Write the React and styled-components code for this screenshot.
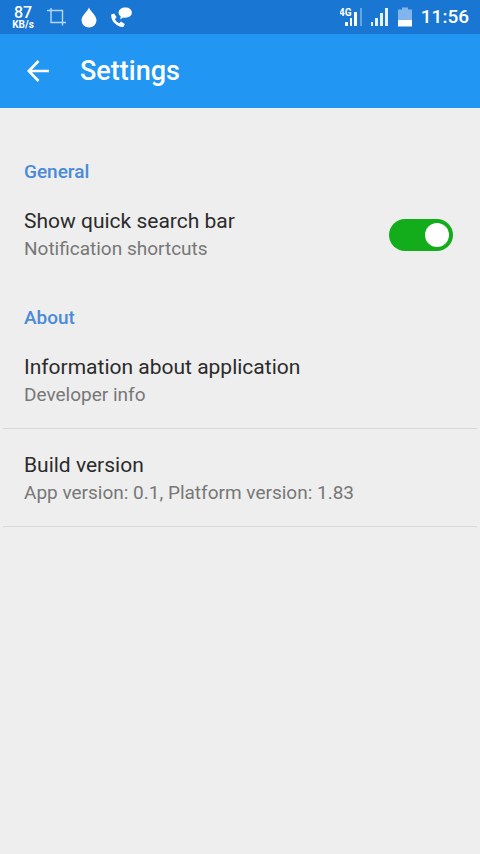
import { useState } from "react"
import styled, { createGlobalStyle } from "styled-components"

const GlobalStyle = createGlobalStyle`
  *{
    box-sizing: border-box;
  }
  html, body{
    margin: 0;
    min-height: 100%;
    background-color: #eeeeee;
  }
  body{
    font-family: Roboto, "Liberation Sans", sans-serif;
  }
`

const StatusBar = styled.div`
  display: flex;
  align-items: center;
  justify-content: space-between;
  height: 34px;
  padding: 0 11px 0 13px;
  background-color: #1976d2;
  color: #ffffff;
`

const StatusGroup = styled.div`
  display: flex;
  align-items: center;
  gap: ${props => props.$gap}px;

  svg{
    display: block;
  }
`

const NetSpeed = styled.div`
  display: flex;
  flex-direction: column;
  align-items: center;
  width: 20px;
  padding-top: 2px;
  font-size: 10px;
  font-weight: 700;
  line-height: 10px;

  strong{
    font-size: 16px;
    font-weight: 500;
    line-height: 14px;
  }
`

const Clock = styled.time`
  font-size: 19px;
  font-weight: 500;
  line-height: 24px;
`

const AppBar = styled.header`
  display: flex;
  align-items: center;
  gap: 28px;
  height: 74px;
  padding: 0 24px;
  background-color: #2196f3;
  color: #ffffff;

  h1{
    margin: 0;
    font-size: 27px;
    font-weight: 500;
    line-height: 32px;
  }
`

const BackButton = styled.button`
  display: flex;
  align-items: center;
  justify-content: center;
  width: 28px;
  height: 28px;
  padding: 0;
  border: 0;
  background: none;
  color: inherit;
  cursor: pointer;
`

const Content = styled.main`
  display: flex;
  flex-direction: column;
  gap: 22px;
  padding: 50px 3px 0;
`

const SectionTitle = styled.h2`
  margin: 0;
  padding: 0 21px;
  color: #4a8ad8;
  font-size: 19px;
  font-weight: 500;
  line-height: 27px;
`

const SettingRow = styled.div`
  display: flex;
  align-items: center;
  justify-content: space-between;
  padding: 23px 24px 20px 21px;
  border-bottom: ${props => props.$divider ? "1px solid #d8d8d8" : "0"};
`

const RowTitle = styled.span`
  display: block;
  color: #2b2b2b;
  font-size: 21px;
  line-height: 27px;
`

const RowDescription = styled.span`
  display: block;
  color: #777777;
  font-size: 19px;
  line-height: 27px;
`

const Switch = styled.input`
  appearance: none;
  display: flex;
  align-items: center;
  width: 64px;
  height: 32px;
  margin: 0;
  padding: 0 4px;
  border-radius: 16px;
  background-color: #9e9e9e;
  cursor: pointer;

  &::before{
    content: "";
    width: 24px;
    height: 24px;
    border-radius: 50%;
    background-color: #ffffff;
  }
  &:checked{
    justify-content: flex-end;
    background-color: #13ad1b;
  }
`

function CropIcon() {
  return (
    <svg width="20" height="20" viewBox="0 0 20 20" fill="none" stroke="#b5d8f8" strokeWidth="1.4">
      <path d="M4 1V15.5H19M0 3.5H15.5V18.5" />
    </svg>
  )
}

function DropIcon() {
  return (
    <svg width="16" height="21" viewBox="0 0 16 21" fill="#ffffff">
      <path d="M8 0.5C9.4 4.2 15.5 8.6 15.5 13.3A7.5 7.2 0 0 1 0.5 13.3C0.5 8.6 6.6 4.2 8 0.5Z" />
    </svg>
  )
}

function CallMessageIcon() {
  return (
    <svg width="22" height="21" viewBox="0 0 22 21" fill="#ffffff">
      <path d="M14.4 0.5C18.2 0.5 20.9 2.6 20.9 5.6S18.2 10.8 14.4 10.8C13.6 10.8 12.8 10.7 12.1 10.5L9.3 12.6L9.7 9.4C8.4 8.5 7.6 7.2 7.6 5.6C7.6 2.6 10.6 0.5 14.4 0.5Z" />
      <path d="M0.2 7.6L3.1 6.5L5.6 10.2L3.9 12.2C4.9 14.2 6.4 15.5 8.3 16.2L10 14.6L13.8 17L12.6 19.8C8.2 21.2 -0.6 15.2 0.2 7.6Z" />
    </svg>
  )
}

function MobileDataIcon() {
  return (
    <svg width="22" height="19" viewBox="0 0 22 19" fill="#ffffff">
      <text x="-1" y="8" fontSize="10" fontWeight="700">4G</text>
      <path d="M5 14h3v4H5zM10 10h2v8h-2zM14 4h3v14h-3z" />
      <path d="M20 0h2v18h-2z" opacity="0.35" />
    </svg>
  )
}

function SignalIcon() {
  return (
    <svg width="18" height="19" viewBox="0 0 18 19" fill="#e4f3ff">
      <path d="M0 14h2v4H0zM4 10h3v8H4zM9 5h3v13H9zM14 0h3v18h-3z" />
    </svg>
  )
}

function BatteryIcon() {
  return (
    <svg width="14" height="20" viewBox="0 0 14 20">
      <path d="M4 0.5H10V2.5H14V14H0V2.5H4Z" fill="#82b5ee" />
      <path d="M0 13H14V19.5H0Z" fill="#ffffff" />
    </svg>
  )
}

function BackIcon() {
  return (
    <svg width="24" height="24" viewBox="0 0 24 24" fill="none" stroke="currentColor" strokeWidth="2.6">
      <path d="M12.5 2L2.8 12L12.5 22M2.8 12H23" />
    </svg>
  )
}

function App() {
  const [quickSearch, setQuickSearch] = useState(true)

  return (
    <>
      <GlobalStyle />
      <StatusBar>
        <StatusGroup $gap={14}>
          <NetSpeed>
            <strong>87</strong>
            <span>KB/s</span>
          </NetSpeed>
          <CropIcon />
          <DropIcon />
          <CallMessageIcon />
        </StatusGroup>
        <StatusGroup $gap={9}>
          <MobileDataIcon />
          <SignalIcon />
          <BatteryIcon />
          <Clock>11:56</Clock>
        </StatusGroup>
      </StatusBar>
      <AppBar>
        <BackButton type="button" aria-label="Back">
          <BackIcon />
        </BackButton>
        <h1>Settings</h1>
      </AppBar>
      <Content>
        <section>
          <SectionTitle>General</SectionTitle>
          <SettingRow>
            <label htmlFor="quickSearch">
              <RowTitle>Show quick search bar</RowTitle>
              <RowDescription>Notification shortcuts</RowDescription>
            </label>
            <Switch
              id="quickSearch"
              type="checkbox"
              role="switch"
              checked={quickSearch}
              onChange={e => setQuickSearch(e.target.checked)}
            />
          </SettingRow>
        </section>
        <section>
          <SectionTitle>About</SectionTitle>
          <SettingRow $divider>
            <div>
              <RowTitle>Information about application</RowTitle>
              <RowDescription>Developer info</RowDescription>
            </div>
          </SettingRow>
          <SettingRow $divider>
            <div>
              <RowTitle>Build version</RowTitle>
              <RowDescription>App version: 0.1, Platform version: 1.83</RowDescription>
            </div>
          </SettingRow>
        </section>
      </Content>
    </>
  )
}

export default App
